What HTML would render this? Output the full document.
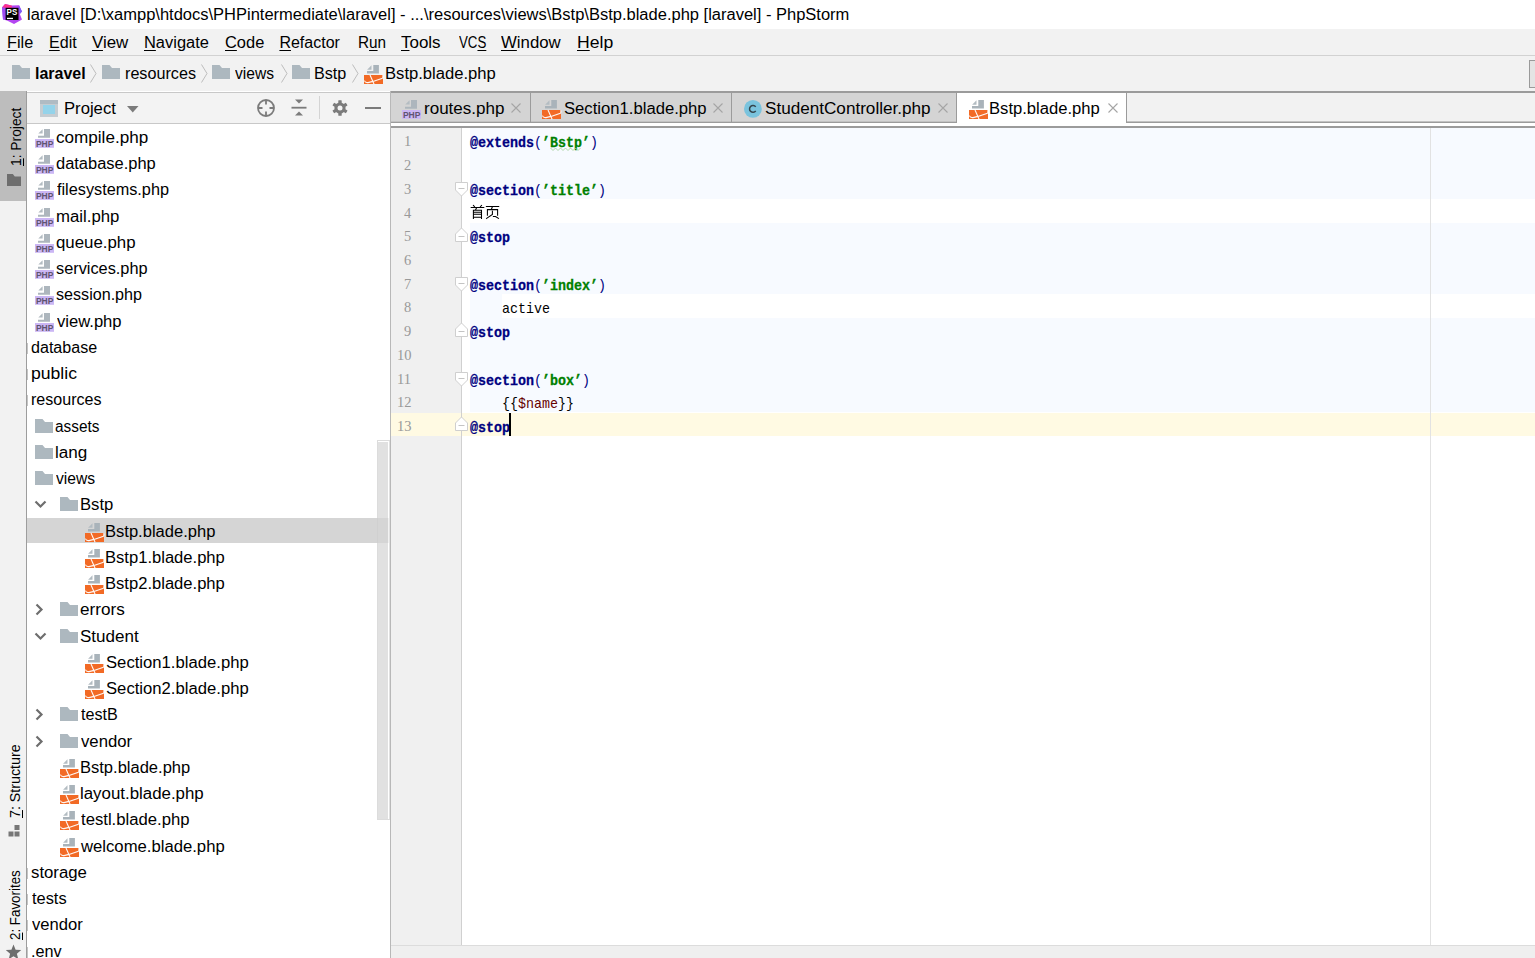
<!DOCTYPE html><html><head><meta charset="utf-8"><style>
*{margin:0;padding:0;box-sizing:border-box}
html,body{width:1535px;height:958px;overflow:hidden;background:#fff;font-family:"Liberation Sans", sans-serif;}
.a{position:absolute}
.t{position:absolute;white-space:pre;font-family:"Liberation Sans", sans-serif;color:#000;line-height:1}
.u{text-decoration:underline;text-underline-offset:2px;text-decoration-thickness:1px}
.code{position:absolute;white-space:pre;font-family:"Liberation Mono", monospace;font-size:15px;line-height:1;transform-origin:0 0;transform:scaleX(0.8889)}
.ln{position:absolute;white-space:pre;font-family:"Liberation Serif",serif;font-size:14.5px;line-height:1;color:#999}
.kw{color:#000080;font-weight:bold;-webkit-text-stroke:0.3px #000080}
.str{color:#008000;font-weight:bold;-webkit-text-stroke:0.3px #008000}
.var{color:#660000}
.nv{color:#000080}
</style></head><body>
<div class="a" style="left:0;top:0;width:1535px;height:29px;background:#fff"></div>
<svg class="a" style="left:0px;top:0px" width="24" height="26" viewBox="0 0 24 26">
<path d="M2 7.3 L5 4 L12 5.5 L19 5.2 L22 11.5 L19.8 14 L22 19.5 L14 24 L7 20.5 L3 19.5 Z" fill="#b345f1"/>
<path d="M2.2 7.5 L5.2 4 L12 5.8 L11.8 7.8 L3 7.8 Z" fill="#ff318c"/>
<path d="M19 5.2 L22 11.5 L19.8 14 L18.5 10 Z" fill="#7c5cf8"/>
<path d="M2 7.3 L3 19.5 L5.6 19 L5.6 8 Z" fill="#9d4cf2"/>
<rect x="5.6" y="7.8" width="12.9" height="12.2" fill="#000"/>
<text x="6.6" y="15.2" font-family="Liberation Sans" font-weight="bold" font-size="8.2" fill="#fff" textLength="10.6" lengthAdjust="spacingAndGlyphs">PS</text>
<rect x="7" y="17.8" width="6" height="1.3" fill="#fff"/></svg>
<div class="t" style="left:26.67px;top:7px;font-size:16px;transform-origin:0 0;transform:scaleX(1.0309);">laravel [D:\xampp\htdocs\PHPintermediate\laravel] - ...\resources\views\Bstp\Bstp.blade.php [laravel] - PhpStorm</div>
<div class="a" style="left:0;top:29px;width:1535px;height:62px;background:#f2f2f2"></div>
<div class="a" style="left:0;top:55px;width:1535px;height:1px;background:#d2d2d2"></div>
<div class="t" style="left:6.9px;top:35px;font-size:16px;transform-origin:0 0;transform:scaleX(1.016);"><span class="u">F</span>ile</div>
<div class="t" style="left:49.0px;top:35px;font-size:16px;transform-origin:0 0;transform:scaleX(1.0036);"><span class="u">E</span>dit</div>
<div class="t" style="left:91.7px;top:35px;font-size:16px;transform-origin:0 0;transform:scaleX(1.0559);"><span class="u">V</span>iew</div>
<div class="t" style="left:143.8px;top:35px;font-size:16px;transform-origin:0 0;transform:scaleX(1.027);"><span class="u">N</span>avigate</div>
<div class="t" style="left:224.7px;top:35px;font-size:16px;transform-origin:0 0;transform:scaleX(1.0263);"><span class="u">C</span>ode</div>
<div class="t" style="left:279.4px;top:35px;font-size:16px;transform-origin:0 0;transform:scaleX(1.0);"><span class="u">R</span>efactor</div>
<div class="t" style="left:357.64px;top:35px;font-size:16px;transform-origin:0 0;transform:scaleX(0.9571);">R<span class="u">u</span>n</div>
<div class="t" style="left:401.3px;top:35px;font-size:16px;transform-origin:0 0;transform:scaleX(1.0595);"><span class="u">T</span>ools</div>
<div class="t" style="left:458.8px;top:35px;font-size:16px;transform-origin:0 0;transform:scaleX(0.8303);">VC<span class="u">S</span></div>
<div class="t" style="left:501.0px;top:35px;font-size:16px;transform-origin:0 0;transform:scaleX(1.0491);"><span class="u">W</span>indow</div>
<div class="t" style="left:577.2px;top:35px;font-size:16px;transform-origin:0 0;transform:scaleX(1.1);"><span class="u">H</span>elp</div>
<svg class="a" style="left:12px;top:65px" width="18" height="14" viewBox="0 0 18 14" preserveAspectRatio="none">
<path d="M0 0 H7.5 L10 3 H18 V14 H0 Z" fill="#adb8bf"/></svg>
<div class="t" style="left:34.6px;top:66px;font-size:16px;font-weight:bold;transform-origin:0 0;transform:scaleX(0.998);">laravel</div>
<svg class="a" style="left:89.5px;top:64px" width="8" height="19" viewBox="0 0 8 19"><path d="M0.5 0.5 L6 9.5 L0.5 18.5" stroke="#bdbdbd" stroke-width="1" fill="none"/></svg>
<svg class="a" style="left:102px;top:65px" width="18" height="14" viewBox="0 0 18 14" preserveAspectRatio="none">
<path d="M0 0 H7.5 L10 3 H18 V14 H0 Z" fill="#adb8bf"/></svg>
<div class="t" style="left:124.59px;top:66px;font-size:16px;transform-origin:0 0;transform:scaleX(1.0101);">resources</div>
<svg class="a" style="left:200.5px;top:64px" width="8" height="19" viewBox="0 0 8 19"><path d="M0.5 0.5 L6 9.5 L0.5 18.5" stroke="#bdbdbd" stroke-width="1" fill="none"/></svg>
<svg class="a" style="left:212px;top:65px" width="18" height="14" viewBox="0 0 18 14" preserveAspectRatio="none">
<path d="M0 0 H7.5 L10 3 H18 V14 H0 Z" fill="#adb8bf"/></svg>
<div class="t" style="left:235.3px;top:66px;font-size:16px;transform-origin:0 0;transform:scaleX(0.975);">views</div>
<svg class="a" style="left:280.5px;top:64px" width="8" height="19" viewBox="0 0 8 19"><path d="M0.5 0.5 L6 9.5 L0.5 18.5" stroke="#bdbdbd" stroke-width="1" fill="none"/></svg>
<svg class="a" style="left:292px;top:65px" width="18" height="14" viewBox="0 0 18 14" preserveAspectRatio="none">
<path d="M0 0 H7.5 L10 3 H18 V14 H0 Z" fill="#adb8bf"/></svg>
<div class="t" style="left:314.49px;top:66px;font-size:16px;transform-origin:0 0;transform:scaleX(1.01);">Bstp</div>
<svg class="a" style="left:351.5px;top:64px" width="8" height="19" viewBox="0 0 8 19"><path d="M0.5 0.5 L6 9.5 L0.5 18.5" stroke="#bdbdbd" stroke-width="1" fill="none"/></svg>
<svg class="a" style="left:364px;top:64.5px" width="20" height="20" viewBox="0 0 20 20">
<path d="M9.3 0 H14.9 V8.5 H3 V6 H9.3 Z" fill="#a9b3ba"/><path d="M3.1 4.8 L7.5 0.2 V4.8 Z" fill="#b3bcc2"/>
<rect x="0" y="10" width="19" height="9" fill="#f26a25"/>
<path d="M6 10 L10.1 19.2 M0.4 15.6 Q1.2 18 4 17.6 L9 16.4 L18.4 13.2 Q19.4 12 18.6 10.2" stroke="#fff" stroke-width="1.1" fill="none" opacity="0.95"/></svg>
<div class="t" style="left:385.16px;top:66px;font-size:16px;transform-origin:0 0;transform:scaleX(1.0381);">Bstp.blade.php</div>
<div class="a" style="left:1529px;top:60px;width:10px;height:28px;background:#e4e4e4;border:1px solid #9a9a9a"></div>
<div class="a" style="left:0;top:91px;width:26px;height:867px;background:#f2f2f2"></div>
<div class="a" style="left:26px;top:91px;width:1px;height:867px;background:#9d9d9d"></div>
<div class="a" style="left:0;top:91px;width:26px;height:110px;background:#bdbdbd"></div>
<div class="t" style="left:7.5px;top:166.4px;font-size:15px;;transform-origin:0 0;transform:rotate(-90deg) scaleX(0.92)"><span class="u">1</span>: Project</div>
<svg class="a" style="left:7px;top:174px" width="14" height="12" viewBox="0 0 18 14" preserveAspectRatio="none">
<path d="M0 0 H7.5 L10 3 H18 V14 H0 Z" fill="#6e6e6e"/></svg>
<div class="t" style="left:6.8px;top:818.2px;font-size:15px;;transform-origin:0 0;transform:rotate(-90deg) scaleX(0.95)"><span class="u">7</span>: Structure</div>
<svg class="a" style="left:8px;top:825px" width="13" height="12" viewBox="0 0 13 12"><rect x="6.5" y="0" width="5" height="5" fill="#777"/><rect x="0.5" y="6.5" width="5" height="5" fill="#777"/><rect x="6.5" y="6.5" width="5" height="5" fill="#777"/></svg>
<div class="t" style="left:7.2px;top:939.8px;font-size:15px;;transform-origin:0 0;transform:rotate(-90deg) scaleX(0.89)"><span class="u">2</span>: Favorites</div>
<svg class="a" style="left:5px;top:944px" width="17" height="16" viewBox="0 0 17 16"><path d="M8.5 0.5 L10.6 5.7 L16.2 6.1 L11.9 9.7 L13.3 15.2 L8.5 12.2 L3.7 15.2 L5.1 9.7 L0.8 6.1 L6.4 5.7 Z" fill="#6e6e6e"/></svg>
<div class="a" style="left:27px;top:92px;width:363px;height:31px;background:#f3f3f3"></div>
<div class="a" style="left:27px;top:92px;width:363px;height:1px;background:#c8c8c8"></div>
<div class="a" style="left:27px;top:123px;width:363px;height:1px;background:#c8c8c8"></div>
<div class="a" style="left:40px;top:100px;width:18px;height:17px;background:#c5ccd1"></div>
<div class="a" style="left:40px;top:100px;width:18px;height:4px;background:#b0bbc3"></div>
<div class="a" style="left:43px;top:105px;width:12px;height:9px;background:#94d3ea"></div>
<div class="t" style="left:63.66px;top:101px;font-size:16px;transform-origin:0 0;transform:scaleX(1.0408);">Project</div>
<svg class="a" style="left:127px;top:106px" width="12" height="7" viewBox="0 0 12 7"><path d="M0 0 H11.5 L5.75 6.5 Z" fill="#7b7b7b"/></svg>
<svg class="a" style="left:256px;top:98px" width="20" height="20" viewBox="0 0 20 20"><circle cx="10" cy="10" r="8" stroke="#7b7b7b" stroke-width="1.8" fill="none"/>
<path d="M10 2 V6.5 M10 13.5 V18 M2 10 H6.5 M13.5 10 H18" stroke="#7b7b7b" stroke-width="1.8"/></svg>
<svg class="a" style="left:291px;top:99px" width="16" height="18" viewBox="0 0 16 18"><path d="M4 0.5 H12 L8 4.5 Z M4 16.5 H12 L8 12.5 Z" fill="#7b7b7b"/><rect x="0.5" y="7.8" width="15" height="1.8" fill="#7b7b7b"/></svg>
<div class="a" style="left:319px;top:96px;width:1px;height:23px;background:#d4d4d4"></div>
<svg class="a" style="left:332px;top:100px" width="16" height="16" viewBox="0 0 16 16"><g fill="#7b7b7b"><circle cx="8" cy="8" r="5.6"/>
<rect x="6.3" y="0.2" width="3.4" height="15.6" rx="0.6"/><rect x="6.3" y="0.2" width="3.4" height="15.6" rx="0.6" transform="rotate(60 8 8)"/><rect x="6.3" y="0.2" width="3.4" height="15.6" rx="0.6" transform="rotate(120 8 8)"/></g><circle cx="8" cy="8" r="2.5" fill="#f3f3f3"/></svg>
<div class="a" style="left:365px;top:107px;width:16px;height:2px;background:#7b7b7b"></div>
<div class="a" style="left:27px;top:124px;width:363px;height:834px;background:#fff"></div>
<div class="a" style="left:27px;top:518px;width:363px;height:25px;background:#d5d5d5"></div>
<svg class="a" style="left:35px;top:129px" width="20" height="20" viewBox="0 0 20 20">
<path d="M9 0 H15 V8.7 H3 V6.8 H9 Z" fill="#adb6bd"/><path d="M3.3 4.4 L7.6 0.2 V4.4 Z" fill="#b3bcc2"/>
<rect x="0" y="10" width="19" height="8.8" fill="#cbb6f4"/>
<text x="9.6" y="18" font-family="Liberation Sans" font-weight="bold" font-size="8.8" fill="#5f5470" text-anchor="middle" textLength="17.4" lengthAdjust="spacingAndGlyphs">PHP</text></svg>
<div class="t" style="left:55.53px;top:130px;font-size:16px;transform-origin:0 0;transform:scaleX(1.0682);">compile.php</div>
<svg class="a" style="left:35px;top:155px" width="20" height="20" viewBox="0 0 20 20">
<path d="M9 0 H15 V8.7 H3 V6.8 H9 Z" fill="#adb6bd"/><path d="M3.3 4.4 L7.6 0.2 V4.4 Z" fill="#b3bcc2"/>
<rect x="0" y="10" width="19" height="8.8" fill="#cbb6f4"/>
<text x="9.6" y="18" font-family="Liberation Sans" font-weight="bold" font-size="8.8" fill="#5f5470" text-anchor="middle" textLength="17.4" lengthAdjust="spacingAndGlyphs">PHP</text></svg>
<div class="t" style="left:55.67px;top:156px;font-size:16px;transform-origin:0 0;transform:scaleX(1.0284);">database.php</div>
<svg class="a" style="left:35px;top:181px" width="20" height="20" viewBox="0 0 20 20">
<path d="M9 0 H15 V8.7 H3 V6.8 H9 Z" fill="#adb6bd"/><path d="M3.3 4.4 L7.6 0.2 V4.4 Z" fill="#b3bcc2"/>
<rect x="0" y="10" width="19" height="8.8" fill="#cbb6f4"/>
<text x="9.6" y="18" font-family="Liberation Sans" font-weight="bold" font-size="8.8" fill="#5f5470" text-anchor="middle" textLength="17.4" lengthAdjust="spacingAndGlyphs">PHP</text></svg>
<div class="t" style="left:56.7px;top:182px;font-size:16px;transform-origin:0 0;transform:scaleX(1.0155);">filesystems.php</div>
<svg class="a" style="left:35px;top:208px" width="20" height="20" viewBox="0 0 20 20">
<path d="M9 0 H15 V8.7 H3 V6.8 H9 Z" fill="#adb6bd"/><path d="M3.3 4.4 L7.6 0.2 V4.4 Z" fill="#b3bcc2"/>
<rect x="0" y="10" width="19" height="8.8" fill="#cbb6f4"/>
<text x="9.6" y="18" font-family="Liberation Sans" font-weight="bold" font-size="8.8" fill="#5f5470" text-anchor="middle" textLength="17.4" lengthAdjust="spacingAndGlyphs">PHP</text></svg>
<div class="t" style="left:55.65px;top:209px;font-size:16px;transform-origin:0 0;transform:scaleX(1.0475);">mail.php</div>
<svg class="a" style="left:35px;top:234px" width="20" height="20" viewBox="0 0 20 20">
<path d="M9 0 H15 V8.7 H3 V6.8 H9 Z" fill="#adb6bd"/><path d="M3.3 4.4 L7.6 0.2 V4.4 Z" fill="#b3bcc2"/>
<rect x="0" y="10" width="19" height="8.8" fill="#cbb6f4"/>
<text x="9.6" y="18" font-family="Liberation Sans" font-weight="bold" font-size="8.8" fill="#5f5470" text-anchor="middle" textLength="17.4" lengthAdjust="spacingAndGlyphs">PHP</text></svg>
<div class="t" style="left:55.65px;top:235px;font-size:16px;transform-origin:0 0;transform:scaleX(1.0514);">queue.php</div>
<svg class="a" style="left:35px;top:260px" width="20" height="20" viewBox="0 0 20 20">
<path d="M9 0 H15 V8.7 H3 V6.8 H9 Z" fill="#adb6bd"/><path d="M3.3 4.4 L7.6 0.2 V4.4 Z" fill="#b3bcc2"/>
<rect x="0" y="10" width="19" height="8.8" fill="#cbb6f4"/>
<text x="9.6" y="18" font-family="Liberation Sans" font-weight="bold" font-size="8.8" fill="#5f5470" text-anchor="middle" textLength="17.4" lengthAdjust="spacingAndGlyphs">PHP</text></svg>
<div class="t" style="left:55.68px;top:261px;font-size:16px;transform-origin:0 0;transform:scaleX(1.0193);">services.php</div>
<svg class="a" style="left:35px;top:286px" width="20" height="20" viewBox="0 0 20 20">
<path d="M9 0 H15 V8.7 H3 V6.8 H9 Z" fill="#adb6bd"/><path d="M3.3 4.4 L7.6 0.2 V4.4 Z" fill="#b3bcc2"/>
<rect x="0" y="10" width="19" height="8.8" fill="#cbb6f4"/>
<text x="9.6" y="18" font-family="Liberation Sans" font-weight="bold" font-size="8.8" fill="#5f5470" text-anchor="middle" textLength="17.4" lengthAdjust="spacingAndGlyphs">PHP</text></svg>
<div class="t" style="left:55.69px;top:287px;font-size:16px;transform-origin:0 0;transform:scaleX(1.0071);">session.php</div>
<svg class="a" style="left:35px;top:313px" width="20" height="20" viewBox="0 0 20 20">
<path d="M9 0 H15 V8.7 H3 V6.8 H9 Z" fill="#adb6bd"/><path d="M3.3 4.4 L7.6 0.2 V4.4 Z" fill="#b3bcc2"/>
<rect x="0" y="10" width="19" height="8.8" fill="#cbb6f4"/>
<text x="9.6" y="18" font-family="Liberation Sans" font-weight="bold" font-size="8.8" fill="#5f5470" text-anchor="middle" textLength="17.4" lengthAdjust="spacingAndGlyphs">PHP</text></svg>
<div class="t" style="left:56.7px;top:314px;font-size:16px;transform-origin:0 0;transform:scaleX(1.0371);">view.php</div>
<div class="a" style="left:27px;top:343px;width:1px;height:11px;background:#c4c4c4"></div>
<div class="t" style="left:30.9px;top:340px;font-size:16px;transform-origin:0 0;transform:scaleX(1.0047);">database</div>
<div class="a" style="left:27px;top:369px;width:1px;height:11px;background:#c4c4c4"></div>
<div class="t" style="left:30.8px;top:366px;font-size:16px;transform-origin:0 0;transform:scaleX(1.1);">public</div>
<div class="a" style="left:27px;top:395px;width:1px;height:11px;background:#c4c4c4"></div>
<div class="t" style="left:30.9px;top:392px;font-size:16px;transform-origin:0 0;transform:scaleX(1.0029);">resources</div>
<svg class="a" style="left:35px;top:419px" width="18" height="14" viewBox="0 0 18 14" preserveAspectRatio="none">
<path d="M0 0 H7.5 L10 3 H18 V14 H0 Z" fill="#adb8bf"/></svg>
<div class="t" style="left:55.34px;top:419px;font-size:16px;transform-origin:0 0;transform:scaleX(0.96);">assets</div>
<svg class="a" style="left:35px;top:445px" width="18" height="14" viewBox="0 0 18 14" preserveAspectRatio="none">
<path d="M0 0 H7.5 L10 3 H18 V14 H0 Z" fill="#adb8bf"/></svg>
<div class="t" style="left:55.23px;top:445px;font-size:16px;transform-origin:0 0;transform:scaleX(1.0679);">lang</div>
<svg class="a" style="left:35px;top:471px" width="18" height="14" viewBox="0 0 18 14" preserveAspectRatio="none">
<path d="M0 0 H7.5 L10 3 H18 V14 H0 Z" fill="#adb8bf"/></svg>
<div class="t" style="left:56.3px;top:471px;font-size:16px;transform-origin:0 0;transform:scaleX(0.9775);">views</div>
<svg class="a" style="left:34px;top:500px" width="14" height="10" viewBox="0 0 14 10">
<path d="M1.5 1.5 L6.5 6.5 L11.5 1.5" stroke="#6e6e6e" stroke-width="2.2" fill="none"/></svg>
<svg class="a" style="left:60px;top:497px" width="18" height="14" viewBox="0 0 18 14" preserveAspectRatio="none">
<path d="M0 0 H7.5 L10 3 H18 V14 H0 Z" fill="#adb8bf"/></svg>
<div class="t" style="left:80.26px;top:497px;font-size:16px;transform-origin:0 0;transform:scaleX(1.04);">Bstp</div>
<svg class="a" style="left:85px;top:523px" width="20" height="20" viewBox="0 0 20 20">
<path d="M9.3 0 H14.9 V8.5 H3 V6 H9.3 Z" fill="#a9b3ba"/><path d="M3.1 4.8 L7.5 0.2 V4.8 Z" fill="#b3bcc2"/>
<rect x="0" y="10" width="19" height="9" fill="#f26a25"/>
<path d="M6 10 L10.1 19.2 M0.4 15.6 Q1.2 18 4 17.6 L9 16.4 L18.4 13.2 Q19.4 12 18.6 10.2" stroke="#fff" stroke-width="1.1" fill="none" opacity="0.95"/></svg>
<div class="t" style="left:105.27px;top:524px;font-size:16px;transform-origin:0 0;transform:scaleX(1.0343);">Bstp.blade.php</div>
<svg class="a" style="left:85px;top:549px" width="20" height="20" viewBox="0 0 20 20">
<path d="M9.3 0 H14.9 V8.5 H3 V6 H9.3 Z" fill="#a9b3ba"/><path d="M3.1 4.8 L7.5 0.2 V4.8 Z" fill="#b3bcc2"/>
<rect x="0" y="10" width="19" height="9" fill="#f26a25"/>
<path d="M6 10 L10.1 19.2 M0.4 15.6 Q1.2 18 4 17.6 L9 16.4 L18.4 13.2 Q19.4 12 18.6 10.2" stroke="#fff" stroke-width="1.1" fill="none" opacity="0.95"/></svg>
<div class="t" style="left:105.26px;top:550px;font-size:16px;transform-origin:0 0;transform:scaleX(1.036);">Bstp1.blade.php</div>
<svg class="a" style="left:85px;top:575px" width="20" height="20" viewBox="0 0 20 20">
<path d="M9.3 0 H14.9 V8.5 H3 V6 H9.3 Z" fill="#a9b3ba"/><path d="M3.1 4.8 L7.5 0.2 V4.8 Z" fill="#b3bcc2"/>
<rect x="0" y="10" width="19" height="9" fill="#f26a25"/>
<path d="M6 10 L10.1 19.2 M0.4 15.6 Q1.2 18 4 17.6 L9 16.4 L18.4 13.2 Q19.4 12 18.6 10.2" stroke="#fff" stroke-width="1.1" fill="none" opacity="0.95"/></svg>
<div class="t" style="left:105.26px;top:576px;font-size:16px;transform-origin:0 0;transform:scaleX(1.036);">Bstp2.blade.php</div>
<svg class="a" style="left:35px;top:603px" width="10" height="14" viewBox="0 0 10 14">
<path d="M1.5 1.5 L6.5 6.5 L1.5 11.5" stroke="#6e6e6e" stroke-width="2.2" fill="none"/></svg>
<svg class="a" style="left:60px;top:602px" width="18" height="14" viewBox="0 0 18 14" preserveAspectRatio="none">
<path d="M0 0 H7.5 L10 3 H18 V14 H0 Z" fill="#adb8bf"/></svg>
<div class="t" style="left:80.33px;top:602px;font-size:16px;transform-origin:0 0;transform:scaleX(1.07);">errors</div>
<svg class="a" style="left:34px;top:632px" width="14" height="10" viewBox="0 0 14 10">
<path d="M1.5 1.5 L6.5 6.5 L11.5 1.5" stroke="#6e6e6e" stroke-width="2.2" fill="none"/></svg>
<svg class="a" style="left:60px;top:629px" width="18" height="14" viewBox="0 0 18 14" preserveAspectRatio="none">
<path d="M0 0 H7.5 L10 3 H18 V14 H0 Z" fill="#adb8bf"/></svg>
<div class="t" style="left:80.34px;top:629px;font-size:16px;transform-origin:0 0;transform:scaleX(1.063);">Student</div>
<svg class="a" style="left:85px;top:654px" width="20" height="20" viewBox="0 0 20 20">
<path d="M9.3 0 H14.9 V8.5 H3 V6 H9.3 Z" fill="#a9b3ba"/><path d="M3.1 4.8 L7.5 0.2 V4.8 Z" fill="#b3bcc2"/>
<rect x="0" y="10" width="19" height="9" fill="#f26a25"/>
<path d="M6 10 L10.1 19.2 M0.4 15.6 Q1.2 18 4 17.6 L9 16.4 L18.4 13.2 Q19.4 12 18.6 10.2" stroke="#fff" stroke-width="1.1" fill="none" opacity="0.95"/></svg>
<div class="t" style="left:105.66px;top:655px;font-size:16px;transform-origin:0 0;transform:scaleX(1.0415);">Section1.blade.php</div>
<svg class="a" style="left:85px;top:680px" width="20" height="20" viewBox="0 0 20 20">
<path d="M9.3 0 H14.9 V8.5 H3 V6 H9.3 Z" fill="#a9b3ba"/><path d="M3.1 4.8 L7.5 0.2 V4.8 Z" fill="#b3bcc2"/>
<rect x="0" y="10" width="19" height="9" fill="#f26a25"/>
<path d="M6 10 L10.1 19.2 M0.4 15.6 Q1.2 18 4 17.6 L9 16.4 L18.4 13.2 Q19.4 12 18.6 10.2" stroke="#fff" stroke-width="1.1" fill="none" opacity="0.95"/></svg>
<div class="t" style="left:105.66px;top:681px;font-size:16px;transform-origin:0 0;transform:scaleX(1.0415);">Section2.blade.php</div>
<svg class="a" style="left:35px;top:708px" width="10" height="14" viewBox="0 0 10 14">
<path d="M1.5 1.5 L6.5 6.5 L1.5 11.5" stroke="#6e6e6e" stroke-width="2.2" fill="none"/></svg>
<svg class="a" style="left:60px;top:707px" width="18" height="14" viewBox="0 0 18 14" preserveAspectRatio="none">
<path d="M0 0 H7.5 L10 3 H18 V14 H0 Z" fill="#adb8bf"/></svg>
<div class="t" style="left:81.4px;top:707px;font-size:16px;transform-origin:0 0;transform:scaleX(1.0083);">testB</div>
<svg class="a" style="left:35px;top:735px" width="10" height="14" viewBox="0 0 10 14">
<path d="M1.5 1.5 L6.5 6.5 L1.5 11.5" stroke="#6e6e6e" stroke-width="2.2" fill="none"/></svg>
<svg class="a" style="left:60px;top:734px" width="18" height="14" viewBox="0 0 18 14" preserveAspectRatio="none">
<path d="M0 0 H7.5 L10 3 H18 V14 H0 Z" fill="#adb8bf"/></svg>
<div class="t" style="left:81.4px;top:734px;font-size:16px;transform-origin:0 0;transform:scaleX(1.0449);">vendor</div>
<svg class="a" style="left:60px;top:759px" width="20" height="20" viewBox="0 0 20 20">
<path d="M9.3 0 H14.9 V8.5 H3 V6 H9.3 Z" fill="#a9b3ba"/><path d="M3.1 4.8 L7.5 0.2 V4.8 Z" fill="#b3bcc2"/>
<rect x="0" y="10" width="19" height="9" fill="#f26a25"/>
<path d="M6 10 L10.1 19.2 M0.4 15.6 Q1.2 18 4 17.6 L9 16.4 L18.4 13.2 Q19.4 12 18.6 10.2" stroke="#fff" stroke-width="1.1" fill="none" opacity="0.95"/></svg>
<div class="t" style="left:80.37px;top:760px;font-size:16px;transform-origin:0 0;transform:scaleX(1.0324);">Bstp.blade.php</div>
<svg class="a" style="left:60px;top:785px" width="20" height="20" viewBox="0 0 20 20">
<path d="M9.3 0 H14.9 V8.5 H3 V6 H9.3 Z" fill="#a9b3ba"/><path d="M3.1 4.8 L7.5 0.2 V4.8 Z" fill="#b3bcc2"/>
<rect x="0" y="10" width="19" height="9" fill="#f26a25"/>
<path d="M6 10 L10.1 19.2 M0.4 15.6 Q1.2 18 4 17.6 L9 16.4 L18.4 13.2 Q19.4 12 18.6 10.2" stroke="#fff" stroke-width="1.1" fill="none" opacity="0.95"/></svg>
<div class="t" style="left:80.35px;top:786px;font-size:16px;transform-origin:0 0;transform:scaleX(1.0534);">layout.blade.php</div>
<svg class="a" style="left:60px;top:811px" width="20" height="20" viewBox="0 0 20 20">
<path d="M9.3 0 H14.9 V8.5 H3 V6 H9.3 Z" fill="#a9b3ba"/><path d="M3.1 4.8 L7.5 0.2 V4.8 Z" fill="#b3bcc2"/>
<rect x="0" y="10" width="19" height="9" fill="#f26a25"/>
<path d="M6 10 L10.1 19.2 M0.4 15.6 Q1.2 18 4 17.6 L9 16.4 L18.4 13.2 Q19.4 12 18.6 10.2" stroke="#fff" stroke-width="1.1" fill="none" opacity="0.95"/></svg>
<div class="t" style="left:81.4px;top:812px;font-size:16px;transform-origin:0 0;transform:scaleX(1.0423);">testl.blade.php</div>
<svg class="a" style="left:60px;top:838px" width="20" height="20" viewBox="0 0 20 20">
<path d="M9.3 0 H14.9 V8.5 H3 V6 H9.3 Z" fill="#a9b3ba"/><path d="M3.1 4.8 L7.5 0.2 V4.8 Z" fill="#b3bcc2"/>
<rect x="0" y="10" width="19" height="9" fill="#f26a25"/>
<path d="M6 10 L10.1 19.2 M0.4 15.6 Q1.2 18 4 17.6 L9 16.4 L18.4 13.2 Q19.4 12 18.6 10.2" stroke="#fff" stroke-width="1.1" fill="none" opacity="0.95"/></svg>
<div class="t" style="left:81.4px;top:839px;font-size:16px;transform-origin:0 0;transform:scaleX(1.0423);">welcome.blade.php</div>
<div class="a" style="left:27px;top:868px;width:1px;height:11px;background:#c4c4c4"></div>
<div class="t" style="left:30.65px;top:865px;font-size:16px;transform-origin:0 0;transform:scaleX(1.0481);">storage</div>
<div class="a" style="left:27px;top:894px;width:1px;height:11px;background:#c4c4c4"></div>
<div class="t" style="left:31.7px;top:891px;font-size:16px;transform-origin:0 0;transform:scaleX(1.0242);">tests</div>
<div class="a" style="left:27px;top:920px;width:1px;height:11px;background:#c4c4c4"></div>
<div class="t" style="left:31.7px;top:917px;font-size:16px;transform-origin:0 0;transform:scaleX(1.0367);">vendor</div>
<div class="a" style="left:27px;top:947px;width:1px;height:11px;background:#c4c4c4"></div>
<div class="t" style="left:30.69px;top:944px;font-size:16px;transform-origin:0 0;transform:scaleX(1.0138);">.env</div>
<div class="a" style="left:377px;top:440px;width:13px;height:380px;background:#e1e1e1;border:1px solid #dcdcdc;border-right:none"></div>
<div class="a" style="left:378px;top:441px;width:11px;height:378px;background:#e1e1e1;border-top:1px solid #fff;border-right:1px solid #fff"></div>
<div class="a" style="left:377px;top:518px;width:12px;height:25px;background:#000;opacity:0.05"></div>
<div class="a" style="left:390px;top:91px;width:1145px;height:2px;background:#9b9b9b"></div>
<div class="a" style="left:390px;top:91px;width:1px;height:867px;background:#b8b8b8"></div>
<div class="a" style="left:391px;top:121px;width:1144px;height:1px;background:#c2c2c2"></div>
<div class="a" style="left:391px;top:122px;width:1144px;height:1px;background:#9b9b9b"></div>
<div class="a" style="left:391px;top:126px;width:1144px;height:2px;background:#9b9b9b"></div>
<div class="a" style="left:391px;top:93px;width:139px;height:28px;background:#d4d4d4"></div>
<div class="a" style="left:530px;top:93px;width:1px;height:30px;background:#9b9b9b"></div>
<svg class="a" style="left:402px;top:100px" width="20" height="20" viewBox="0 0 20 20">
<path d="M9 0 H15 V8.7 H3 V6.8 H9 Z" fill="#adb6bd"/><path d="M3.3 4.4 L7.6 0.2 V4.4 Z" fill="#b3bcc2"/>
<rect x="0" y="10" width="19" height="8.8" fill="#cbb6f4"/>
<text x="9.6" y="18" font-family="Liberation Sans" font-weight="bold" font-size="8.8" fill="#5f5470" text-anchor="middle" textLength="17.4" lengthAdjust="spacingAndGlyphs">PHP</text></svg>
<div class="t" style="left:423.64px;top:101px;font-size:16px;transform-origin:0 0;transform:scaleX(1.0635);">routes.php</div>
<svg class="a" style="left:511px;top:103px" width="10" height="10" viewBox="0 0 10 10"><path d="M0.5 0.5 L9.5 9.5 M9.5 0.5 L0.5 9.5" stroke="#a5a5a5" stroke-width="1.1"/></svg>
<div class="a" style="left:531px;top:93px;width:200px;height:28px;background:#d4d4d4"></div>
<div class="a" style="left:731px;top:93px;width:1px;height:30px;background:#9b9b9b"></div>
<svg class="a" style="left:542px;top:100px" width="20" height="20" viewBox="0 0 20 20">
<path d="M9.3 0 H14.9 V8.5 H3 V6 H9.3 Z" fill="#a9b3ba"/><path d="M3.1 4.8 L7.5 0.2 V4.8 Z" fill="#b3bcc2"/>
<rect x="0" y="10" width="19" height="9" fill="#f26a25"/>
<path d="M6 10 L10.1 19.2 M0.4 15.6 Q1.2 18 4 17.6 L9 16.4 L18.4 13.2 Q19.4 12 18.6 10.2" stroke="#fff" stroke-width="1.1" fill="none" opacity="0.95"/></svg>
<div class="t" style="left:563.66px;top:101px;font-size:16px;transform-origin:0 0;transform:scaleX(1.0407);">Section1.blade.php</div>
<svg class="a" style="left:713px;top:103px" width="10" height="10" viewBox="0 0 10 10"><path d="M0.5 0.5 L9.5 9.5 M9.5 0.5 L0.5 9.5" stroke="#a5a5a5" stroke-width="1.1"/></svg>
<div class="a" style="left:732px;top:93px;width:224px;height:28px;background:#d4d4d4"></div>
<div class="a" style="left:956px;top:93px;width:1px;height:33px;background:#9b9b9b"></div>
<svg class="a" style="left:744px;top:100px" width="18" height="18" viewBox="0 0 18 18"><circle cx="8.9" cy="8.9" r="8.9" fill="#7ac3dd"/><path d="M11.7 6.9 A3.4 3.4 0 1 0 11.7 10.9" stroke="#34444c" stroke-width="1.5" fill="none"/></svg>
<div class="t" style="left:764.53px;top:101px;font-size:16px;transform-origin:0 0;transform:scaleX(1.0699);">StudentController.php</div>
<svg class="a" style="left:938px;top:103px" width="10" height="10" viewBox="0 0 10 10"><path d="M0.5 0.5 L9.5 9.5 M9.5 0.5 L0.5 9.5" stroke="#a5a5a5" stroke-width="1.1"/></svg>
<div class="a" style="left:957px;top:93px;width:169px;height:33px;background:#fff"></div>
<div class="a" style="left:1126px;top:93px;width:1px;height:33px;background:#9b9b9b"></div>
<svg class="a" style="left:969px;top:100px" width="20" height="20" viewBox="0 0 20 20">
<path d="M9.3 0 H14.9 V8.5 H3 V6 H9.3 Z" fill="#a9b3ba"/><path d="M3.1 4.8 L7.5 0.2 V4.8 Z" fill="#b3bcc2"/>
<rect x="0" y="10" width="19" height="9" fill="#f26a25"/>
<path d="M6 10 L10.1 19.2 M0.4 15.6 Q1.2 18 4 17.6 L9 16.4 L18.4 13.2 Q19.4 12 18.6 10.2" stroke="#fff" stroke-width="1.1" fill="none" opacity="0.95"/></svg>
<div class="t" style="left:989.16px;top:101px;font-size:16px;transform-origin:0 0;transform:scaleX(1.0381);">Bstp.blade.php</div>
<svg class="a" style="left:1108px;top:103px" width="10" height="10" viewBox="0 0 10 10"><path d="M0.5 0.5 L9.5 9.5 M9.5 0.5 L0.5 9.5" stroke="#a5a5a5" stroke-width="1.1"/></svg>
<div class="a" style="left:1127px;top:93px;width:408px;height:28px;background:#f2f2f2"></div>
<div class="a" style="left:391px;top:123px;width:1144px;height:3px;background:#fff"></div>
<div class="a" style="left:391px;top:128px;width:70px;height:817px;background:#f0f0f0"></div>
<div class="a" style="left:470px;top:128px;width:1065px;height:71px;background:#f7faff"></div>
<div class="a" style="left:470px;top:223px;width:1065px;height:71px;background:#f7faff"></div>
<div class="a" style="left:470px;top:318px;width:1065px;height:94px;background:#f7faff"></div>
<div class="a" style="left:470px;top:294px;width:32px;height:24px;background:#f7faff"></div>
<div class="a" style="left:391px;top:413px;width:1144px;height:23px;background:#fffae3"></div>
<div class="a" style="left:461px;top:128px;width:1px;height:817px;background:#d0d0d0"></div>
<div class="a" style="left:1430px;top:128px;width:1px;height:817px;background:#e2e2e2"></div>
<div class="a" style="left:391px;top:945px;width:1144px;height:13px;background:#efefef;border-top:1px solid #dcdcdc"></div>
<div class="ln" style="left:404px;top:134px">1</div>
<div class="code" style="left:469.5px;top:136px;color:#000"><span class="kw">@extends</span><span class="nv">(</span><span class="str">’Bstp’</span><span class="nv">)</span></div>
<div class="ln" style="left:404px;top:158px">2</div>
<div class="ln" style="left:404px;top:182px">3</div>
<div class="code" style="left:469.5px;top:184px;color:#000"><span class="kw">@section</span><span class="nv">(</span><span class="str">’title’</span><span class="nv">)</span></div>
<div class="ln" style="left:404px;top:206px">4</div>
<div class="ln" style="left:404px;top:229px">5</div>
<div class="code" style="left:469.5px;top:231px;color:#000"><span class="kw">@stop</span></div>
<div class="ln" style="left:404px;top:253px">6</div>
<div class="ln" style="left:404px;top:277px">7</div>
<div class="code" style="left:469.5px;top:279px;color:#000"><span class="kw">@section</span><span class="nv">(</span><span class="str">’index’</span><span class="nv">)</span></div>
<div class="ln" style="left:404px;top:300px">8</div>
<div class="code" style="left:469.5px;top:302px;color:#000">    active</div>
<div class="ln" style="left:404px;top:324px">9</div>
<div class="code" style="left:469.5px;top:326px;color:#000"><span class="kw">@stop</span></div>
<div class="ln" style="left:397px;top:348px">10</div>
<div class="ln" style="left:397px;top:372px">11</div>
<div class="code" style="left:469.5px;top:374px;color:#000"><span class="kw">@section</span><span class="nv">(</span><span class="str">’box’</span><span class="nv">)</span></div>
<div class="ln" style="left:397px;top:395px">12</div>
<div class="code" style="left:469.5px;top:397px;color:#000">    {{<span class="var">$name</span>}}</div>
<div class="ln" style="left:397px;top:419px">13</div>
<div class="code" style="left:469.5px;top:421px;color:#000"><span class="kw">@stop</span></div>
<svg class="a" style="left:468px;top:200px" width="36" height="24" viewBox="0 0 36 24"><g stroke="#000" stroke-width="1.05" fill="none" stroke-linecap="square">
<path d="M5.4 5.4 L6.5 6.8 M13.5 5.4 L12.4 6.8 M3.2 7.4 H15.8 M8.6 7.8 L7.6 9.8 M5.4 10.3 V18.4 M13.5 10.3 V18.4 M5.4 10.3 H13.5 M5.4 12.2 H13.5 M5.4 14.3 H13.5 M5.4 17.3 H13.5"/>
<path d="M18.4 6.4 H30.7 M24.4 6.8 L23.5 9 M19.4 9.6 H29.6 M19.4 9.6 V15.2 M29.6 9.6 V15.2 M24.4 11.3 V14.4 L18.6 18.4 M25.4 16.5 H27.5 L30.5 18.4"/></g></svg>
<svg class="a" style="left:455px;top:182px" width="14" height="15" viewBox="0 0 14 15"><path d="M0.5 0.5 H12.5 V8 L6.5 14 L0.5 8 Z" fill="#fff" stroke="#cfcfcf"/><path d="M3.5 6.5 H9.5" stroke="#c4c4c4"/></svg>
<svg class="a" style="left:455px;top:227px" width="14" height="15" viewBox="0 0 14 15"><path d="M0.5 14.5 H12.5 V7 L6.5 1 L0.5 7 Z" fill="#fff" stroke="#cfcfcf"/><path d="M3.5 9.5 H9.5" stroke="#c4c4c4"/></svg>
<svg class="a" style="left:455px;top:277px" width="14" height="15" viewBox="0 0 14 15"><path d="M0.5 0.5 H12.5 V8 L6.5 14 L0.5 8 Z" fill="#fff" stroke="#cfcfcf"/><path d="M3.5 6.5 H9.5" stroke="#c4c4c4"/></svg>
<svg class="a" style="left:455px;top:322px" width="14" height="15" viewBox="0 0 14 15"><path d="M0.5 14.5 H12.5 V7 L6.5 1 L0.5 7 Z" fill="#fff" stroke="#cfcfcf"/><path d="M3.5 9.5 H9.5" stroke="#c4c4c4"/></svg>
<svg class="a" style="left:455px;top:372px" width="14" height="15" viewBox="0 0 14 15"><path d="M0.5 0.5 H12.5 V8 L6.5 14 L0.5 8 Z" fill="#fff" stroke="#cfcfcf"/><path d="M3.5 6.5 H9.5" stroke="#c4c4c4"/></svg>
<svg class="a" style="left:455px;top:416px" width="14" height="15" viewBox="0 0 14 15"><path d="M0.5 14.5 H12.5 V7 L6.5 1 L0.5 7 Z" fill="#fff" stroke="#cfcfcf"/><path d="M3.5 9.5 H9.5" stroke="#c4c4c4"/></svg>
<svg class="a" style="left:550px;top:147px" width="32" height="5" viewBox="0 0 32 5"><path d="M0.5 1 L3 3.5 L5.5 1 L8 3.5 L10.5 1 L13 3.5 L15.5 1 L18 3.5 L20.5 1 L23 3.5 L25.5 1 L28 3.5 L30.5 1" stroke="#a9d3a2" stroke-width="0.9" fill="none"/></svg>
<div class="a" style="left:509px;top:413px;width:2px;height:23px;background:#000"></div>
</body></html>
